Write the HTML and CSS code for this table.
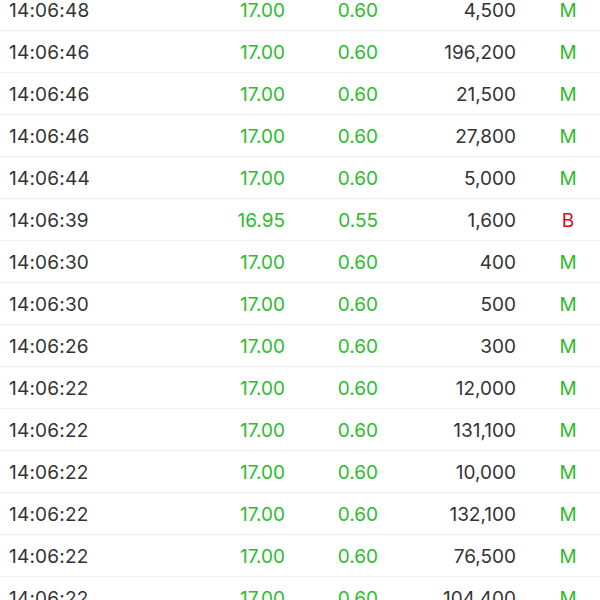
FILE: index.html
```html
<!DOCTYPE html>
<html>
<head>
<meta charset="utf-8">
<link rel="stylesheet" href="styles.css">
</head>
<body>
<div class="list">
  <div class="row"><span class="time">14:06:48</span><span class="price up">17.00</span><span class="chg up">0.60</span><span class="vol">4,500</span><span class="flag m">M</span></div>
  <div class="row"><span class="time">14:06:46</span><span class="price up">17.00</span><span class="chg up">0.60</span><span class="vol">196,200</span><span class="flag m">M</span></div>
  <div class="row"><span class="time">14:06:46</span><span class="price up">17.00</span><span class="chg up">0.60</span><span class="vol">21,500</span><span class="flag m">M</span></div>
  <div class="row"><span class="time">14:06:46</span><span class="price up">17.00</span><span class="chg up">0.60</span><span class="vol">27,800</span><span class="flag m">M</span></div>
  <div class="row"><span class="time">14:06:44</span><span class="price up">17.00</span><span class="chg up">0.60</span><span class="vol">5,000</span><span class="flag m">M</span></div>
  <div class="row"><span class="time">14:06:39</span><span class="price up">16.95</span><span class="chg up">0.55</span><span class="vol">1,600</span><span class="flag b">B</span></div>
  <div class="row"><span class="time">14:06:30</span><span class="price up">17.00</span><span class="chg up">0.60</span><span class="vol">400</span><span class="flag m">M</span></div>
  <div class="row"><span class="time">14:06:30</span><span class="price up">17.00</span><span class="chg up">0.60</span><span class="vol">500</span><span class="flag m">M</span></div>
  <div class="row"><span class="time">14:06:26</span><span class="price up">17.00</span><span class="chg up">0.60</span><span class="vol">300</span><span class="flag m">M</span></div>
  <div class="row"><span class="time">14:06:22</span><span class="price up">17.00</span><span class="chg up">0.60</span><span class="vol">12,000</span><span class="flag m">M</span></div>
  <div class="row"><span class="time">14:06:22</span><span class="price up">17.00</span><span class="chg up">0.60</span><span class="vol">131,100</span><span class="flag m">M</span></div>
  <div class="row"><span class="time">14:06:22</span><span class="price up">17.00</span><span class="chg up">0.60</span><span class="vol">10,000</span><span class="flag m">M</span></div>
  <div class="row"><span class="time">14:06:22</span><span class="price up">17.00</span><span class="chg up">0.60</span><span class="vol">132,100</span><span class="flag m">M</span></div>
  <div class="row"><span class="time">14:06:22</span><span class="price up">17.00</span><span class="chg up">0.60</span><span class="vol">76,500</span><span class="flag m">M</span></div>
  <div class="row"><span class="time">14:06:22</span><span class="price up">17.00</span><span class="chg up">0.60</span><span class="vol">104,400</span><span class="flag m">M</span></div>
</div>
</body>
</html>
```
FILE: styles.css
```css
html, body {
  margin: 0;
  padding: 0;
  background: #ffffff;
  overflow: hidden;
}
body {
  font-family: Inter, "Liberation Sans", sans-serif;
  font-size: 19px;
  color: #333333;
}
.list {
  margin-top: -11px;
}
.row {
  display: grid;
  grid-template-columns: 180px 96px 93px 138px 84px;
  align-items: center;
  box-sizing: border-box;
  height: 42px;
  padding-top: 2px;
  padding-left: 9px;
  border-bottom: 1px solid #efefef;
}
.time {
  letter-spacing: 0.2px;
}
.price, .chg, .vol {
  text-align: right;
}
.flag {
  text-align: center;
  padding-left: 20px;
}
.up, .m {
  color: #2dbb2d;
}
.b {
  color: #d0101e;
}
```
